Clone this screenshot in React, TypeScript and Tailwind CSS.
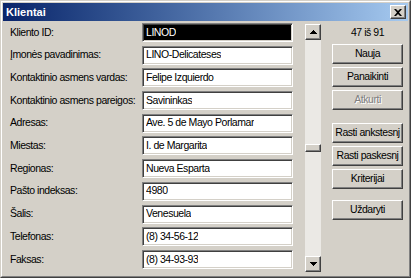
const fields = [
  { label: "Kliento ID:", value: "LINOD", selected: true },
  { label: "Įmonės pavadinimas:", value: "LINO-Delicateses" },
  { label: "Kontaktinio asmens vardas:", value: "Felipe Izquierdo" },
  { label: "Kontaktinio asmens pareigos:", value: "Savininkas" },
  { label: "Adresas:", value: "Ave. 5 de Mayo Porlamar" },
  { label: "Miestas:", value: "I. de Margarita" },
  { label: "Regionas:", value: "Nueva Esparta" },
  { label: "Pašto indeksas:", value: "4980" },
  { label: "Šalis:", value: "Venesuela" },
  { label: "Telefonas:", value: "(8) 34-56-12" },
  { label: "Faksas:", value: "(8) 34-93-93" },
];

const raised =
  "border border-t-white border-l-white border-r-[#404040] border-b-[#404040] shadow-[inset_-1px_-1px_0_#808080] bg-[#d4d0c8]";

function Btn({ label, disabled, className = "" }: { label: string; disabled?: boolean; className?: string }) {
  return (
    <div className={`h-[20px] w-[71px] flex items-center justify-center whitespace-nowrap ${raised} ${className}`}>
      <span
        className={
          disabled ? "text-[#808080] [text-shadow:1px_1px_0_#ffffff]" : "text-black"
        }
      >
        {label}
      </span>
    </div>
  );
}

function Arrow({ up }: { up?: boolean }) {
  return (
    <div className={`h-[16px] w-[16px] flex items-center justify-center ${raised}`}>
      <svg width="7" height="4" viewBox="0 0 7 4">
        {up ? <path d="M3 0h1v1h1v1h1v1h1v1H0V3h1V2h1V1h1z" fill="#000" /> : <path d="M0 0h7v1H6v1H5v1H4v1H3V3H2V2H1V1H0z" fill="#000" />}
      </svg>
    </div>
  );
}

export default function App() {
  return (
    <div className="w-[411px] h-[278px] border border-t-[#d4d0c8] border-l-[#d4d0c8] border-r-[#404040] border-b-[#404040] bg-[#d4d0c8] font-['Liberation_Sans',Arial,sans-serif] text-[10.5px] tracking-[-0.45px] text-black overflow-hidden">
      <div className="h-full border border-t-white border-l-white border-r-[#808080] border-b-[#808080] p-px flex flex-col">
        {/* Title bar */}
        <div className="h-[18px] shrink-0 flex items-center justify-between pl-[3px] pr-[2px] bg-gradient-to-r from-[#0a246a] to-[#a6caf0]">
          <span className="text-white font-bold text-[11px] tracking-normal">Klientai</span>
          <div className={`h-[14px] w-[16px] flex items-center justify-center ${raised}`}>
            <svg width="8" height="7" viewBox="0 0 8 7">
              <path d="M0 0h2l2 2 2-2h2L5 3.5 8 7H6L4 5 2 7H0l3-3.5z" fill="#000" />
            </svg>
          </div>
        </div>

        {/* Body */}
        <div className="flex flex-1 pt-[2px] pl-[7px]">
          <div className="grid grid-cols-[132px_151px] auto-rows-[19px] gap-y-[3.7px]">
            {fields.map((f) => (
              <div key={f.label} className="contents">
                <div className="flex items-center whitespace-nowrap">{f.label}</div>
                <div
                  className={`border border-t-[#808080] border-l-[#808080] border-r-white border-b-white shadow-[inset_1px_1px_0_#404040,inset_-1px_-1px_0_#d4d0c8] flex items-center pl-[3px] pr-[2px] ${
                    f.selected ? "bg-black text-white" : "bg-white"
                  }`}
                >
                  <span className="whitespace-nowrap overflow-hidden">{f.value}</span>
                </div>
              </div>
            ))}
          </div>

          {/* Scrollbar */}
          <div className="ml-[12px] mt-[1px] w-[16px] h-[248px] flex flex-col bg-[#ebe9e5]">
            <Arrow up />
            <div className="flex-1 flex flex-col">
              <div className="h-[104px]" />
              <div className={`h-[8px] w-[16px] ${raised}`} />
            </div>
            <Arrow />
          </div>

          {/* Right column */}
          <div className="ml-[11px] flex flex-col w-[71px]">
            <div className="h-[20px] flex items-center justify-center">47 iš 91</div>
            <Btn label="Nauja" className="mt-[1px]" />
            <Btn label="Panaikinti" className="mt-[3px]" />
            <Btn label="Atkurti" disabled className="mt-[3px]" />
            <Btn label="Rasti ankstesnj" className="mt-[13px]" />
            <Btn label="Rasti paskesnj" className="mt-[3px]" />
            <Btn label="Kriterijai" className="mt-[3px]" />
            <Btn label="Uždaryti" className="mt-[11px]" />
          </div>
        </div>
      </div>
    </div>
  );
}
